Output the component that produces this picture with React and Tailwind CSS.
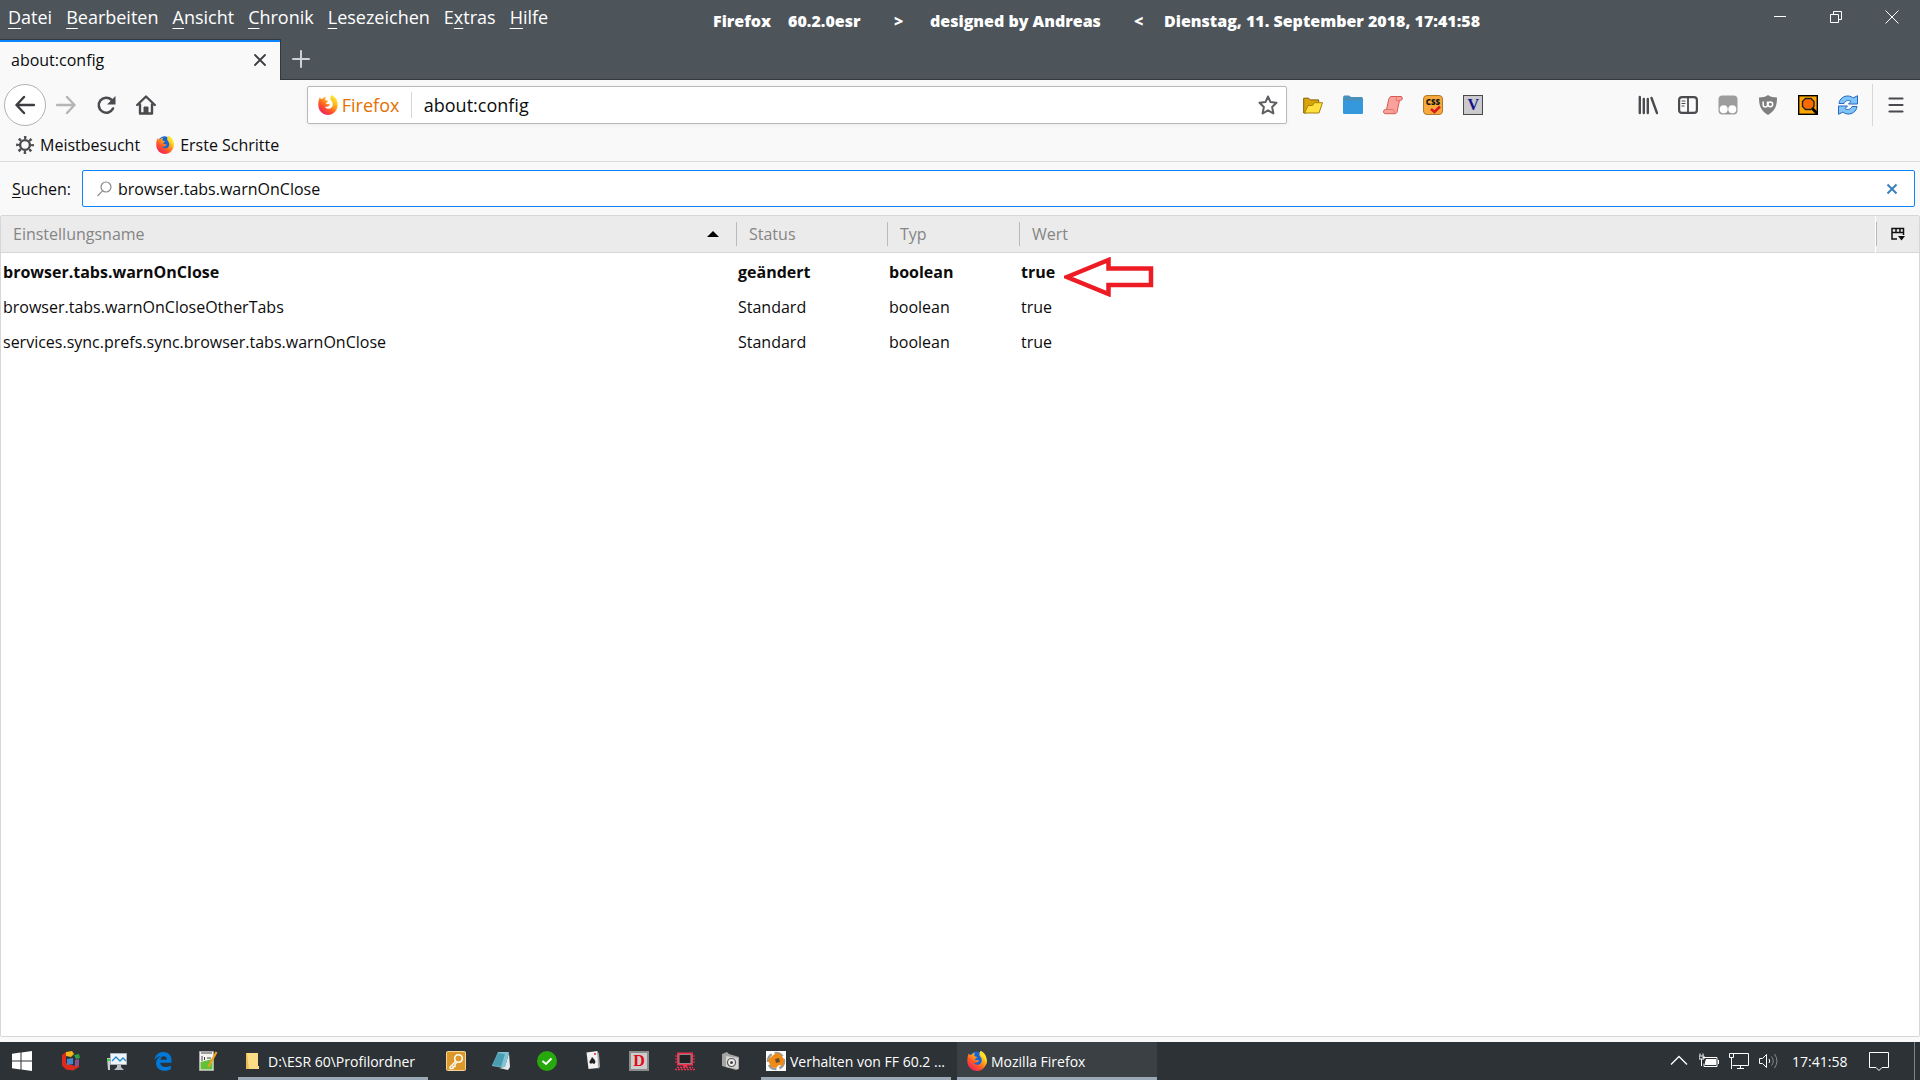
import React, { useState } from 'react';

const menuItems = [
  ['', 'D', 'atei'],
  ['', 'B', 'earbeiten'],
  ['', 'A', 'nsicht'],
  ['', 'C', 'hronik'],
  ['', 'L', 'esezeichen'],
  ['E', 'x', 'tras'],
  ['', 'H', 'ilfe'],
];

const prefs = [
  { name: 'browser.tabs.warnOnClose', status: 'geändert', type: 'boolean', value: 'true', changed: true },
  { name: 'browser.tabs.warnOnCloseOtherTabs', status: 'Standard', type: 'boolean', value: 'true' },
  { name: 'services.sync.prefs.sync.browser.tabs.warnOnClose', status: 'Standard', type: 'boolean', value: 'true' },
];

const FirefoxLogo = ({ className, id, globe = true }) => (
  <svg className={className} viewBox="0 0 20 20">
    <defs>
      <linearGradient id={id} x1="0.85" y1="0.05" x2="0.2" y2="0.95">
        <stop offset="0" stopColor="#fff03a" />
        <stop offset="0.35" stopColor="#ffb01a" />
        <stop offset="0.65" stopColor="#ff5a26" />
        <stop offset="1" stopColor="#f0205e" />
      </linearGradient>
    </defs>
    {globe && <circle cx="9.5" cy="7.6" r="7.2" fill="#1565d8" />}
    <path
      fill={`url(#${id})`}
      d="M1.900 2.300C1 4 .3 6.300.3 9.900.3 15.500 4.700 19.900 10 19.900S19.700 15.500 19.700 10C19.700 5.800 17.700 1.600 13.600 0 12 2 12 4.200 13.300 5.800 14.500 7.200 15.200 9 14.500 10.900 13.700 12.900 12 13.900 10 13.700 8.600 13.500 7.400 12.900 6.900 11.800 8.200 12.100 9.300 11.900 10.100 11.300 10.900 10.800 11.500 10.700 11.800 10.100 12 9.400 11 8.900 9.800 9.100 8.500 9.300 7.900 8.600 8.100 7.900 8.600 7.200 9.900 7 10 6.200 9.300 5.500 8.100 5.500 7.700 5.300 6.900 4.300 7.200 2.700 8.100 1.800 6.500 2 5.300 2.900 4.600 3.700 4 3.600 3.400 3.700 3 3.900 2.500 3.500 2.100 3 1.900 2.300z"
    />
    {globe && <path fill="#ffe226" d="M13.600 0C17.700 1.600 19.700 5.800 19.700 10c0 1.400-.3 2.700-.8 3.900.2-3.200-1-6.700-4.400-9.100-1-1.200-1.400-3.200-.9-4.800z" />}
  </svg>
);

const ToolButton = ({ label, children }) => (
  <button type="button" aria-label={label} className="flex h-10 w-10 shrink-0 items-center justify-center text-[#4a4a4f]">
    {children}
  </button>
);

const TitleBar = () => (
  <div className="grid grid-cols-[713px_1fr_auto] text-white">
    <nav className="flex h-[34px] items-center gap-[14px] pl-2 text-[18px]">
      {menuItems.map(([before, key, after]) => (
        <button type="button" key={key}>
          {before}
          <span className="underline decoration-1 underline-offset-4">{key}</span>
          {after}
        </button>
      ))}
    </nav>
    <div className="flex h-[42px] items-center text-[16px] font-extrabold whitespace-nowrap">
      <span className="w-[75px]">Firefox</span>
      <span className="w-[106px]">60.2.0esr</span>
      <span className="w-[36px]">&gt;</span>
      <span className="w-[204px]">designed by Andreas</span>
      <span className="w-[30px]">&lt;</span>
      <span>Dienstag, 11. September 2018, 17:41:58</span>
    </div>
    <div className="flex h-[34px] items-center">
      <button type="button" aria-label="Minimieren" className="flex h-[34px] w-14 items-center justify-center">
        <svg className="h-3 w-3" viewBox="0 0 12 12" stroke="currentColor"><path d="M0 5.500h12" /></svg>
      </button>
      <button type="button" aria-label="Verkleinern" className="flex h-[34px] w-14 items-center justify-center">
        <svg className="h-3 w-3" viewBox="0 0 12 12" fill="none" stroke="currentColor">
          <path d="M.5 3.500h8v8h-8zM3.500 3.500v-3h8v8h-3" />
        </svg>
      </button>
      <button type="button" aria-label="Schließen" className="flex h-[34px] w-14 items-center justify-center">
        <svg className="h-3.5 w-3.5" viewBox="0 0 14 14" stroke="currentColor"><path d="M.5.5l13 13M13.500.5l-13 13" /></svg>
      </button>
    </div>
  </div>
);

const TabStrip = () => (
  <div className="flex h-[41px] items-stretch">
    <div className="flex w-[281px] items-center justify-between border-t border-r border-[#33393d] bg-[#f9f9fa] pr-2 pl-[11px] text-[16px] text-[#0c0c0d] shadow-[inset_0_2px_0_#0a84ff]">
      about:config
      <button type="button" aria-label="Tab schließen" className="flex h-6 w-6 items-center justify-center">
        <svg className="h-3 w-3" viewBox="0 0 12 12" stroke="#3e3e42" strokeWidth="1.800" strokeLinecap="round"><path d="M1 1l10 10M11 1L1 11" /></svg>
      </button>
    </div>
    <div className="flex flex-1 items-center border-b border-[#33393d] pl-[11px]">
      <button type="button" aria-label="Neuer Tab">
        <svg className="h-[18px] w-[18px]" viewBox="0 0 18 18" stroke="#cfd2d4" strokeWidth="2" strokeLinecap="round"><path d="M9 1v16M1 9h16" /></svg>
      </button>
    </div>
  </div>
);

const NavBar = () => {
  const [url, setUrl] = useState('about:config');

  return (
    <div className="flex h-[50px] items-center pl-1">
      <button type="button" aria-label="Zurück" className="flex h-[42px] w-[42px] shrink-0 items-center justify-center rounded-full border border-[#b1b1b3] bg-white">
        <svg className="h-5 w-5" viewBox="0 0 20 20" fill="none" stroke="#3e3e42" strokeWidth="2.400" strokeLinecap="round" strokeLinejoin="round"><path d="M19 10H1.500M9 2L1.500 10 9 18" /></svg>
      </button>
      <ToolButton label="Vor">
        <svg className="h-5 w-5" viewBox="0 0 20 20" fill="none" stroke="#b5b5b7" strokeWidth="2.400" strokeLinecap="round" strokeLinejoin="round"><path d="M1 10h17.500M11 2l7.500 8-7.500 8" /></svg>
      </ToolButton>
      <ToolButton label="Neu laden">
        <svg className="h-5 w-5" viewBox="0 0 20 20" fill="none" stroke="#4a4a4f" strokeWidth="2.600" strokeLinecap="round">
          <path d="M17 13.500A7.500 7.500 0 1 1 15.500 4.800" />
          <path d="M19.500 1v8.500H11z" fill="#4a4a4f" stroke="none" />
        </svg>
      </ToolButton>
      <ToolButton label="Startseite">
        <svg className="h-5 w-5" viewBox="0 0 20 20" fill="none" stroke="#4a4a4f" strokeWidth="2.400" strokeLinecap="round" strokeLinejoin="round">
          <path d="M1.200 10L10 1.500l8.800 8.500M4 9.500V18.500h12V9.500" />
          <path d="M8 18v-6h4v6z" fill="#4a4a4f" strokeWidth="1" />
        </svg>
      </ToolButton>
      <div className="flex-[141]" />
      <div className="flex h-[38px] min-w-0 flex-[980] items-center rounded-xs border border-[#b9b9bb] bg-white text-[18px] shadow-[0_1px_4px_rgba(0,0,0,0.05)]">
        <FirefoxLogo id="identity" globe={false} className="ml-2.5 h-5 w-5" />
        <span className="ml-1 w-[69px] text-[#e57000]">Firefox</span>
        <div className="h-[26px] w-px bg-[#d7d7db]" />
        <input
          aria-label="Adresse"
          className="min-w-0 flex-1 pl-3 text-[#0c0c0d] outline-none"
          value={url}
          onChange={(e) => setUrl(e.target.value)}
        />
        <button type="button" aria-label="Lesezeichen setzen" className="mr-2">
          <svg className="h-5 w-5" viewBox="0 0 20 20" fill="none" stroke="#5f5f63" strokeWidth="2" strokeLinejoin="round"><path d="M10 1.500l2.500 5.600 6 .7-4.400 4.100 1.300 6.600L10 15.300l-5.400 3.200 1.300-6.600L1.500 7.800l6-.7z" /></svg>
        </button>
      </div>
      <div className="flex pl-1.5">
        <ToolButton label="Ordner öffnen">
          <svg className="h-5 w-5" viewBox="0 0 20 20" strokeLinejoin="round">
            <path d="M.7 18V3.200h5l1.500 1.700h8.500V8L3 18z" fill="#d9a40a" stroke="#7e5f05" />
            <path d="M1.500 18L5 10.500h4.500l2-2.800h8L16 18z" fill="#ffe03c" stroke="#a77f0b" />
          </svg>
        </ToolButton>
        <ToolButton label="Profilordner">
          <svg className="h-5 w-5" viewBox="0 0 20 20">
            <path d="M0 3.500C0 1.500.5.500 1.500.500h4C7 .500 7 2 8.500 2H18c1.200 0 2 .6 2 2V7H0z" fill="#4a90bd" />
            <path d="M0 5.500h20v12c0 1-.5 1.500-1.500 1.500h-17C.5 19 0 18.500 0 17.500z" fill="#3598dc" />
          </svg>
        </ToolButton>
        <ToolButton label="Skripte">
          <svg className="h-5 w-5" viewBox="0 0 20 20" strokeLinejoin="round">
            <path d="M6 3.500C6.500 2 7.500 1.500 9 1.500h9.500c1.500 1.500.5 4-1 4h-1L14 17c-.3 1-1 1.700-2.200 1.700H2C0 18.500.2 15 2 14.500h1.500z" fill="#f8a29b" stroke="#d8584e" />
            <path d="M2 14.500h8c1.500.5 1 3.500 1.500 4M16.500 5.500h-3c-1-.3-.5-3 1-4" fill="none" stroke="#e0756c" />
          </svg>
        </ToolButton>
        <ToolButton label="CSS">
          <svg className="h-5 w-5" viewBox="0 0 20 20">
            <rect x=".5" y=".5" width="19" height="19" rx="3.500" fill="#f7a93b" stroke="#b07a2c" />
            <text x="10" y="9.500" textAnchor="middle" fontSize="8" fontWeight="800" fill="#111">CSS</text>
            <path d="M8 14l3.500 3 5.500-5.500" fill="none" stroke="#d9181e" strokeWidth="2.500" />
          </svg>
        </ToolButton>
        <ToolButton label="V">
          <span className="flex h-5 w-5 items-center justify-center border border-[#4a4a4a] bg-[#cacace] font-['Liberation_Serif',serif] text-[16px] leading-none font-bold text-[#14148a]">V</span>
        </ToolButton>
      </div>
      <div className="flex-[135]" />
      <ToolButton label="Bibliothek">
        <svg className="h-5 w-5" viewBox="0 0 20 20" fill="none" stroke="currentColor" strokeWidth="2.400" strokeLinecap="round"><path d="M1.800 2v16M5.800 4v14M9.800 4v14M13.500 3L19 18" /></svg>
      </ToolButton>
      <ToolButton label="Sidebars">
        <svg className="h-5 w-5" viewBox="0 0 20 20" fill="none" stroke="currentColor" strokeWidth="2.200" strokeLinecap="round">
          <rect x="1.100" y="2.100" width="17.800" height="15.800" rx="3" />
          <path d="M10 2.500v15" strokeWidth="1.800" />
          <path d="M4 6h3M4 8.500h3M4 11h2" strokeWidth="1.200" />
        </svg>
      </ToolButton>
      <ToolButton label="Tampermonkey">
        <svg className="h-5 w-5" viewBox="0 0 20 20">
          <rect x=".5" y=".5" width="19" height="19" rx="4" fill="#9d9d9d" />
          <circle cx="5.700" cy="14.300" r="4" fill="#fff" />
          <circle cx="14.300" cy="14.300" r="4" fill="#fff" />
        </svg>
      </ToolButton>
      <ToolButton label="uBlock Origin">
        <svg className="h-5 w-5" viewBox="0 0 20 20">
          <path d="M10 0c2.500 1.800 5.500 2.500 9 2.500 0 8-1.500 13-9 17.500C2.500 15.500 1 10.500 1 2.500 4.500 2.500 7.500 1.800 10 0z" fill="#7f7f7f" />
          <path d="M5.200 6.500v3.600c0 2.600 4.300 2.600 4.300 0V6.500" fill="none" stroke="#fff" strokeWidth="1.500" />
          <circle cx="12.300" cy="9.300" r="2.400" fill="none" stroke="#fff" strokeWidth="1.500" />
        </svg>
      </ToolButton>
      <ToolButton label="Suche">
        <svg className="h-5 w-5" viewBox="0 0 20 20">
          <rect x=".7" y=".7" width="18.600" height="18.600" fill="#ffa500" stroke="#000" strokeWidth="1.400" />
          <path d="M14 13l5 5.500" stroke="#000" strokeWidth="2.800" />
          <path d="M7.500 3.500h5.500l3 3v5l-3 3H7.500l-3-3v-5z" fill="#ff6a00" stroke="#222" strokeWidth="1.400" />
        </svg>
      </ToolButton>
      <ToolButton label="Synchronisieren">
        <svg className="h-5 w-5" viewBox="0 0 20 20" fill="#7fc4fa" stroke="#2769bd" strokeLinejoin="round">
          <path d="M1 8.500C1.500 3.500 6 .8 10 1c2.500.1 4 1 5 2L19.500.7V9h-9L13 6.500C10 4 6.500 6.500 6 8.500z" />
          <path d="M19 11.500c-.5 5-5 7.700-9 7.500-2.500-.1-4-1-5-2L.5 19.300V11h9L7 13.500c3 2.500 6.500 0 7-2z" />
        </svg>
      </ToolButton>
      <div className="ml-1 h-[42px] w-px bg-[#d7d7db]" />
      <div className="pr-1 pl-[3px]">
        <ToolButton label="Menü">
          <svg className="h-4 w-4" viewBox="0 0 16 16" stroke="currentColor" strokeWidth="2.200" strokeLinecap="round"><path d="M1.500 1.500h13M1.500 8h13M1.500 14.500h13" /></svg>
        </ToolButton>
      </div>
    </div>
  );
};

const BookmarksBar = () => (
  <div className="flex h-8 items-center gap-4 border-b border-[#dcdcde] pb-0.5 pl-4 text-[16px] text-[#0c0c0d]">
    <button type="button" className="flex items-center gap-1.5">
      <svg className="h-[18px] w-[18px]" viewBox="0 0 18 18" fill="none" stroke="#4a4a4f">
        <circle cx="9" cy="9" r="4.900" strokeWidth="2.400" />
        <circle cx="9" cy="9" r="7.400" strokeWidth="3" strokeDasharray="2.400 3.410" strokeDashoffset="1.200" />
      </svg>
      Meistbesucht
    </button>
    <button type="button" className="flex items-center gap-1.5">
      <FirefoxLogo id="bookmark" className="h-[18px] w-[18px]" />
      Erste Schritte
    </button>
  </div>
);

const SearchRow = () => {
  const [filter, setFilter] = useState('browser.tabs.warnOnClose');

  return (
    <div className="flex h-[53px] items-center pr-[5px] pl-3 text-[16px] text-[#0c0c0d]">
      <label htmlFor="filter" className="w-[70px] shrink-0">
        <span className="underline decoration-1 underline-offset-2">S</span>uchen:
      </label>
      <div className="flex h-[37px] flex-1 items-center rounded-xs border border-[#0a84ff] bg-white pr-4 pl-3.5">
        <svg className="h-4 w-4" viewBox="0 0 16 16" fill="none" stroke="#8b8b8b" strokeWidth="1.200">
          <circle cx="9" cy="6" r="5" />
          <path d="M5.500 9.800L.5 15" />
        </svg>
        <input
          id="filter"
          type="text"
          className="min-w-0 flex-1 pl-[5px] outline-none"
          value={filter}
          onChange={(e) => setFilter(e.target.value)}
        />
        <button type="button" aria-label="Leeren" onClick={() => setFilter('')}>
          <svg className="h-3 w-3" viewBox="0 0 12 12" stroke="#3d7fb8" strokeWidth="2"><path d="M1.500 1.500l9 9M10.500 1.500l-9 9" /></svg>
        </button>
      </div>
    </div>
  );
};

const HeadCell = ({ children, first }) => (
  <th className="p-0 text-left font-normal">
    <div className={first ? 'flex h-6 items-center justify-between pr-[17px] pl-3' : 'flex h-6 items-center border-l border-[#b9b9bb] pl-3'}>
      {children}
    </div>
  </th>
);

const PrefTable = () => (
  <div className="mb-[5px] flex-1 rounded-xs border border-[#d7d7db] bg-white">
    <table className="w-full table-fixed border-collapse text-[16px] text-[#0c0c0d]">
      <colgroup>
        <col className="w-[735px]" />
        <col className="w-[151px]" />
        <col className="w-[132px]" />
        <col />
        <col className="w-[44px]" />
      </colgroup>
      <thead>
        <tr className="h-9 border-b border-[#d7d7db] bg-[#ebebeb] text-[#858585]">
          <HeadCell first>
            Einstellungsname
            <svg className="h-1.5 w-3" viewBox="0 0 12 6" fill="#000"><path d="M0 6l6-6 6 6z" /></svg>
          </HeadCell>
          <HeadCell>Status</HeadCell>
          <HeadCell>Typ</HeadCell>
          <HeadCell>Wert</HeadCell>
          <th className="border-l border-white p-0">
            <button type="button" aria-label="Spalten auswählen" className="flex h-6 w-full items-center justify-center border-l border-[#b9b9bb]">
              <svg className="h-3.5 w-3.5" viewBox="0 0 14 14" fill="none" stroke="#111" strokeWidth="1.500">
                <path d="M6 12H1V1.500h11.500V8M1 5.500h11.500M5 1.500v4M9 1.500v4" />
                <path d="M7 9h7l-3.500 4.500z" fill="#111" stroke="none" />
              </svg>
            </button>
          </th>
        </tr>
      </thead>
      <tbody>
        {prefs.map((pref) => (
          <tr key={pref.name} className={pref.changed ? 'h-[35px] font-bold' : 'h-[35px]'}>
            <td className="p-0 pt-1 pl-0.5">{pref.name}</td>
            <td className="p-0 pt-1 pl-0.5">{pref.status}</td>
            <td className="p-0 pt-1 pl-0.5">{pref.type}</td>
            <td className="p-0 pt-1 pl-0.5">
              <span className="relative">
                {pref.value}
                {pref.changed && (
                  <svg className="absolute -top-1 left-[43px] h-10 w-[90px]" viewBox="0 0 90 40" fill="none" stroke="#ed1c24" strokeWidth="4.500">
                    <path d="M3 20L44.500 3v8.500H87v16.500H44.500V37z" />
                  </svg>
                )}
              </span>
            </td>
            <td />
          </tr>
        ))}
      </tbody>
    </table>
  </div>
);

const TaskIcon = ({ label, children, className = 'w-[46px]' }) => (
  <button type="button" aria-label={label} className={`flex shrink-0 items-center justify-center ${className}`}>
    <svg className="h-5 w-5" viewBox="0 0 20 20">{children}</svg>
  </button>
);

const Taskbar = () => (
  <div className="flex h-[38px] items-stretch bg-[#2d3236] text-[14px] text-white">
    <TaskIcon label="Start" className="w-11">
      <path d="M0 2.800L8.500 1.600V9.500H0zM9.500 1.500L20 0v9.500H9.500zM0 10.500h8.500v8L0 17.300zM9.500 10.500H20V20L9.500 18.500z" fill="#fff" />
    </TaskIcon>
    <TaskIcon label="Programme" className="w-[54px]">
      <path d="M1 4l4-3v11l9 3 4-2v3l-6 3.500-7-1-4-4z" fill="#dd2a1b" />
      <path d="M5 1l6-1 2 3-3 3-5-1z" fill="#f3b51c" />
      <path d="M13 4l5-1 1 4-4 1z" fill="#2fa04b" />
      <path d="M14 9l4-1v6l-4 2z" fill="#85548f" />
      <path d="M6 8l6-1v6l-6 1z" fill="#3f86cf" />
    </TaskIcon>
    <TaskIcon label="Ressourcenmonitor" className="w-[38px]">
      <path d="M3.500 2.500h16v11h-16z" fill="#eef5fa" stroke="#aab4ba" />
      <path d="M5 10l4-4 4 4 3-3 3 3" fill="none" stroke="#2c87c5" strokeWidth="1.300" />
      <path d="M10 14h4v2l3 3H7l3-3z" fill="#b9bec2" />
      <path d="M0 7h3v12H1z" fill="#c9ced1" />
      <path d="M0 8h3v2H0z" fill="#3cd33c" />
    </TaskIcon>
    <TaskIcon label="Edge" className="w-[54px]">
      <path d="M1.500 9C2.300 3.500 6.200 1 10.300 1c5 0 8.200 3.500 8.200 8v2.700H7.300c.1 3 3 4.200 5.600 4.200 2 0 3.800-.6 5-1.300v3.700c-1.500.9-3.700 1.500-6.200 1.500C6.500 19.800 3 16.500 3 12.200c0-3.200 2-5.900 5-7.200-3 .6-5.200 2-6.500 4zm6-.2h6.400c0-2.300-1.200-3.600-3.100-3.600-1.800 0-3.100 1.500-3.300 3.600z" fill="#0078d7" />
    </TaskIcon>
    <TaskIcon label="Notepad++" className="w-9">
      <path d="M1.500.5h14v19h-14z" fill="#f4f4f2" stroke="#aaa" />
      <path d="M2.500 11l12-3v10.500h-12z" fill="#64bf39" />
      <path d="M4 5v5M6.500 6v3M9 7h4M3 2h11" stroke="#444" />
      <path d="M18.500 1L12 13l-1.500 2.500" stroke="#f0a11c" strokeWidth="2.200" />
    </TaskIcon>
    <button type="button" className="ml-3 flex w-[190px] items-center gap-1 border-b-[3px] border-[#9aa9b5] pt-[3px] pl-1.5 whitespace-nowrap">
      <svg className="h-5 w-5" viewBox="0 0 20 20">
        <path d="M2 2h8v16H2z" fill="#e9bd55" />
        <path d="M3 2h11v13h1v3H5z" fill="#fbdc86" />
      </svg>
      D:\ESR 60\Profilordner
    </button>
    <TaskIcon label="KeePass" className="ml-1.5 w-11">
      <rect x=".5" y=".5" width="19" height="19" rx="1" fill="#dc982a" stroke="#f3d59c" />
      <circle cx="12.500" cy="7.500" r="3.800" fill="none" stroke="#fff" strokeWidth="1.600" />
      <path d="M9.800 10.200L4 16v1.500h3v-2h2v-2l1.500-1.500" fill="none" stroke="#fff" strokeWidth="1.300" />
    </TaskIcon>
    <TaskIcon label="Notizen">
      <path d="M7 1h11l-4 16-13-2z" fill="#7fc5d6" />
      <path d="M7 2l7 1-4 13-9-2z" fill="#4b9db2" />
      <path d="M18 2l1 14-2 3-9-2 6-1z" fill="#e4eaec" />
    </TaskIcon>
    <TaskIcon label="Virenschutz">
      <circle cx="10" cy="10" r="10" fill="#27a80c" />
      <path d="M5.500 10l3.500 3 5.500-5.500" fill="none" stroke="#fff" strokeWidth="2" />
    </TaskIcon>
    <TaskIcon label="Solitär">
      <path d="M3.500 1.500l11-1.500 1 17-10 1z" fill="#f2f2f2" />
      <path d="M14.500 0l1.500 3 1 13-2 2z" fill="#a9a9a9" />
      <path d="M9 6c3 3 4 4 3 6s-2 0-2.500 0c-.5 1-3.500 1-3-1.500C7 9 8.500 8 9 6z" fill="#222" />
      <circle cx="12" cy="3" r="1" fill="#d22" />
    </TaskIcon>
    <button type="button" className="flex w-[46px] items-center justify-center">
      <span className="flex h-5 w-5 items-center justify-center border-2 border-[#8c8c8c] bg-[#cdcdcd] font-['Liberation_Serif',serif] text-[16px] leading-none font-bold text-[#e30613]">D</span>
    </button>
    <TaskIcon label="Bildschirm">
      <path d="M3 2.500h14v11H3z" fill="#202325" stroke="#ee3150" strokeWidth="2" />
      <path d="M4 3.500h12v9H4z" fill="none" stroke="#999" strokeWidth=".8" />
      <path d="M0 5h2M0 8h2M0 11h2M18 5h2M18 8h2M18 11h2" stroke="#ee3150" />
      <path d="M8 14h4v2H8z" fill="#ee3150" />
      <path d="M2 16.500h16M0 18.500h20" stroke="#ee3150" strokeWidth="1.600" strokeDasharray="2 1" />
    </TaskIcon>
    <TaskIcon label="Kamera">
      <path d="M1 3l5-2 2 2 10 3v12l-3 1L1 15z" fill="#a5a5a3" />
      <path d="M5 5l12 2v11L5 16z" fill="#d5d5d2" />
      <circle cx="10.500" cy="11.500" r="4" fill="#efefef" stroke="#555" strokeWidth="1.200" />
      <circle cx="10.500" cy="11.500" r="1.500" fill="#444" />
    </TaskIcon>
    <button type="button" className="ml-[7px] flex w-[190px] items-center gap-1 border-b-[3px] border-[#9aa9b5] pt-[3px] pl-[5px] whitespace-nowrap">
      <svg className="h-5 w-5 shrink-0" viewBox="0 0 20 20">
        <path d="M0 0h20v20H0z" fill="#fff" />
        <circle cx="10" cy="10" r="8" fill="none" stroke="#9b9b9b" strokeWidth="2.500" strokeDasharray="9 3" />
        <path d="M2 9l3-3 5-4 4 1 4 5-1 7-4-1-3 3-5-1z" fill="#ef8a17" />
        <path d="M9 8l4-1 1 4-4 1z" fill="#6b4a2e" />
      </svg>
      Verhalten von FF 60.2 ...
    </button>
    <button type="button" className="ml-1.5 flex w-[200px] items-center gap-1 border-b-[3px] border-[#9aa9b5] bg-[#3a4043] pt-[3px] pl-2.5 whitespace-nowrap">
      <FirefoxLogo id="task" className="h-5 w-5" />
      Mozilla Firefox
    </button>
    <div className="ml-auto flex items-center">
      <TaskIcon label="Ausgeblendete Symbole" className="w-[30px]">
        <path d="M2 13.500l8-8 8 8" fill="none" stroke="#fff" strokeWidth="1.300" />
      </TaskIcon>
      <TaskIcon label="Akku" className="w-[30px]">
        <path d="M3.500 6.500h14.500v9H5v-3M19.500 9v4" fill="none" stroke="#fff" />
        <path d="M7 8h10v6H6v-3z" fill="#fff" />
        <path d="M1 2.500v2M4 2.500v2M0 5h5v3H0zM2.500 8v7" fill="none" stroke="#fff" />
      </TaskIcon>
      <TaskIcon label="Netzwerk" className="w-[30px]">
        <path d="M4 2.500h15.500v12H3.500M11.500 14.500v3M8 17.500h7" fill="none" stroke="#fff" />
        <path d="M.5 2.500h4v4h-4zM2.500 6.500V18" fill="none" stroke="#fff" />
      </TaskIcon>
      <TaskIcon label="Lautstärke" className="w-[30px]">
        <path d="M.5 7.500h3l4-4v13l-4-4h-3zM10 8q1.500 2 0 4" fill="none" stroke="#fff" />
        <path d="M12.500 5.500q3.500 4.500 0 9M15.500 3q5 7 0 14" fill="none" stroke="#858a8d" />
      </TaskIcon>
      <span className="w-[70px] pl-2">17:41:58</span>
      <TaskIcon label="Info-Center" className="w-[50px]">
        <path d="M.5 1.500h19v15H13l-3 3-3-3H.5z" fill="none" stroke="#fff" />
      </TaskIcon>
      <div className="ml-[10px] h-full w-1.5 border-l border-[#7d8285]" />
    </div>
  </div>
);

const App = () => {
  return (
    <div className="flex min-h-screen flex-col bg-[#f9f9fa] font-['Open_Sans','Noto_Sans',sans-serif]">
      <header className="flex h-20 flex-col justify-between bg-[#4d545a]">
        <div className="h-[39px]">
          <TitleBar />
        </div>
        <TabStrip />
      </header>
      <NavBar />
      <BookmarksBar />
      <main className="flex flex-1 flex-col">
        <SearchRow />
        <PrefTable />
      </main>
      <Taskbar />
    </div>
  );
};

export default App;
